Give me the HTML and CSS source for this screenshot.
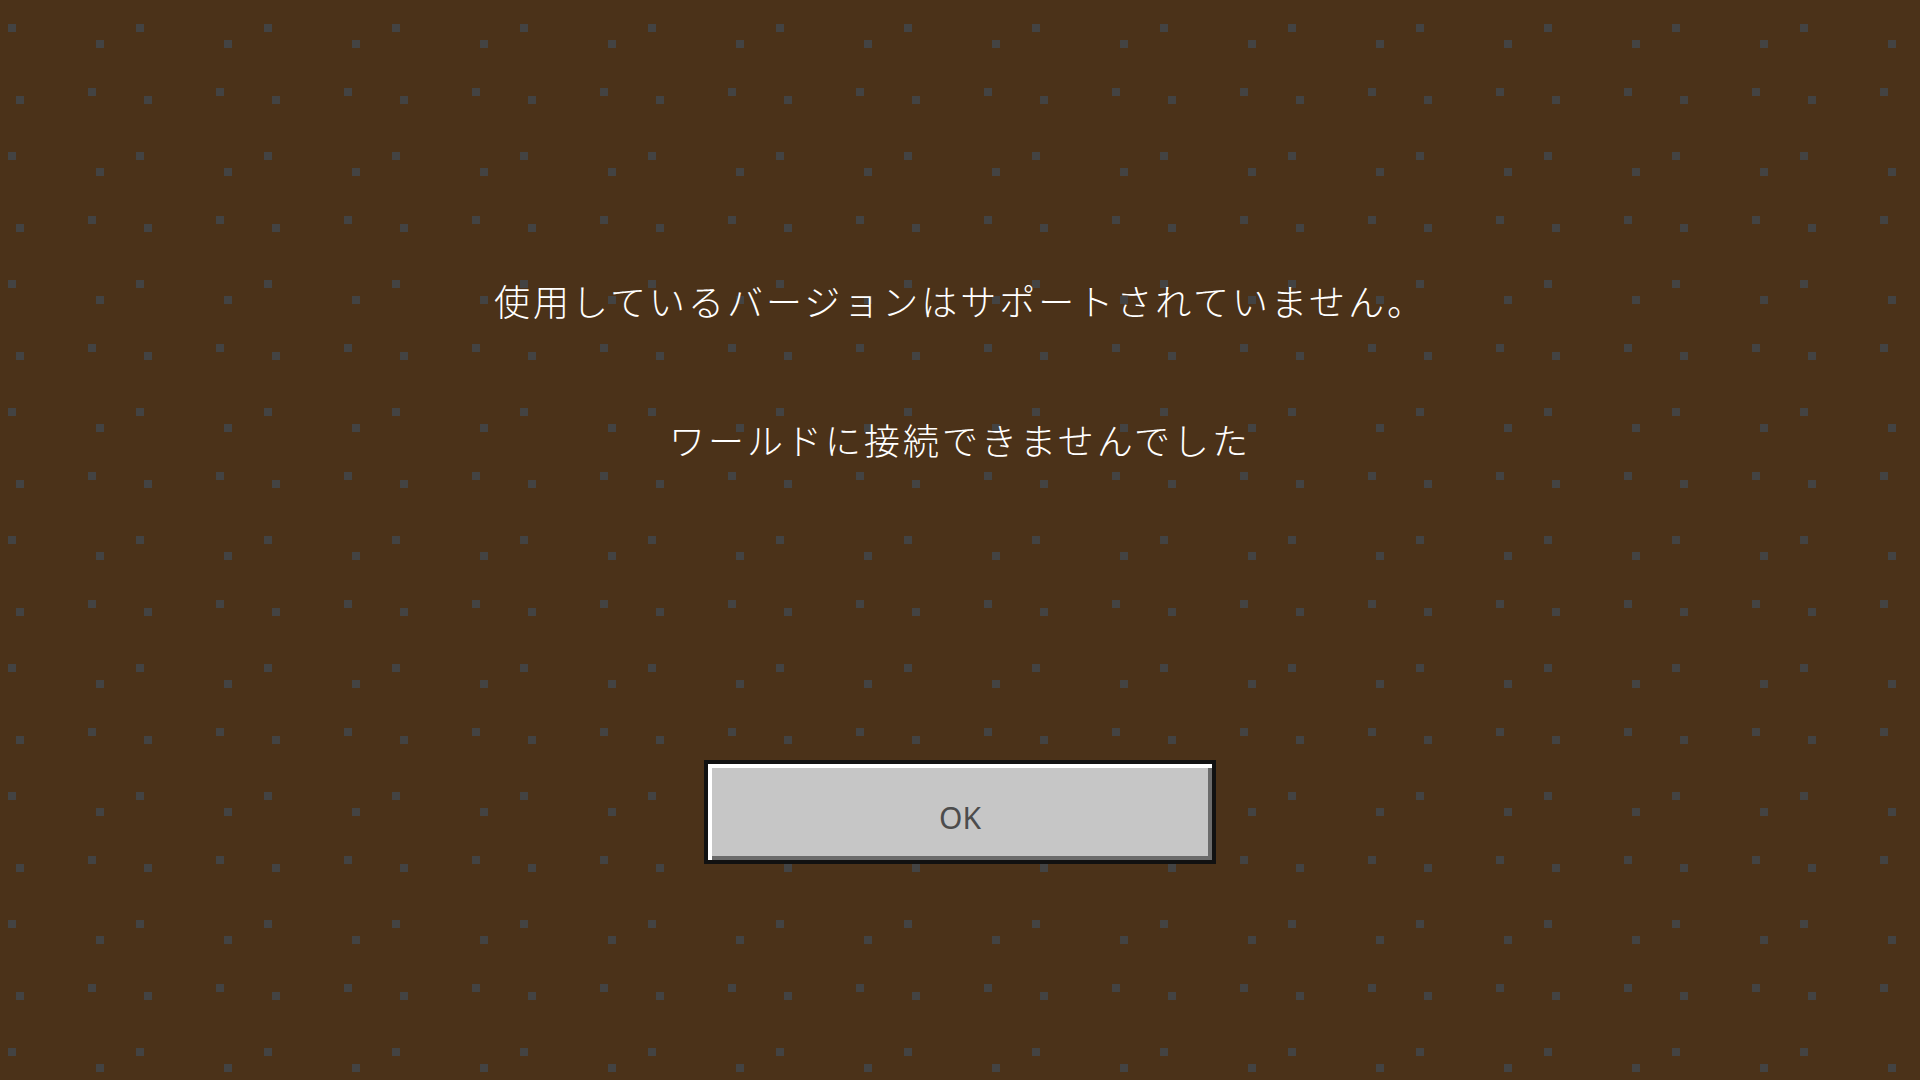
FILE: index.html
```html
<!DOCTYPE html>
<html lang="ja">

<head>
    <meta charset="UTF-8">
    <meta name="viewport" content="width=device-width, initial-scale=1.0">
    <title>接続エラー</title>
    <link rel="stylesheet" href="styles.css">
</head>

<body>
    <div class="screen">
        <div class="messages">
            <p class="message">使用しているバージョンはサポートされていません。</p>
            <p class="message">ワールドに接続できませんでした</p>
        </div>
        <button class="btn" type="button"><span>OK</span></button>
    </div>
</body>

</html>
```

FILE: styles.css
```css
:root {
  --color-bg: #4b3219;
  --color-dot: #434343;
  --color-white: #fff;
  --btn-face: #c6c6c6;
  --btn-light: #fff;
  --btn-shade: #6b6b6b;
  --btn-edge: #111;
}
html,
body {
  margin: 0;
  padding: 0;
  height: 100%;
}
body {
  font-family: "Noto Sans CJK JP", "Noto Sans", sans-serif;
  background-color: var(--color-bg);
  /* dirt pattern: four 8px squares repeating every 128px */
  background-image:
    conic-gradient(at 8px 8px, transparent 75%, var(--color-dot) 0),
    conic-gradient(at 8px 8px, transparent 75%, var(--color-dot) 0),
    conic-gradient(at 8px 8px, transparent 75%, var(--color-dot) 0),
    conic-gradient(at 8px 8px, transparent 75%, var(--color-dot) 0);
  background-size: 128px 128px;
  background-position: 8px 24px, 96px 40px, 88px 88px, 16px 96px;
  overflow: hidden;
}
.screen {
  height: 100vh;
  display: flex;
  flex-direction: column;
  align-items: center;
  padding-top: 276px;
  box-sizing: border-box;
}
.messages {
  display: flex;
  flex-direction: column;
  align-items: center;
  row-gap: 91px;
}
.message {
  margin: 0;
  color: var(--color-white);
  font-size: 36px;
  font-weight: 300;
  line-height: 48px;
  letter-spacing: 3px;
  white-space: nowrap;
}
.btn {
  margin-top: 297px;
  width: 512px;
  height: 104px;
  padding: 0;
  border: 4px solid var(--btn-edge);
  background-color: var(--btn-face);
  box-shadow: inset 4px 4px 0 var(--btn-light), inset -4px -4px 0 var(--btn-shade);
  display: flex;
  align-items: center;
  justify-content: center;
  cursor: pointer;
}
.btn span {
  font-family: "Noto Sans", "Open Sans", sans-serif;
  font-size: 30px;
  color: #4c4c4c;
  padding-top: 10px;
}
```
